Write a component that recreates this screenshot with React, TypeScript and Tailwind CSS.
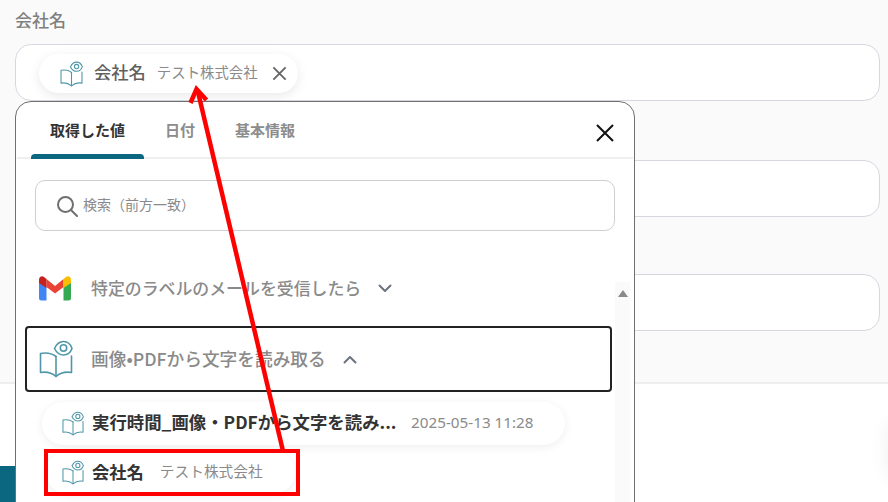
function BookEye({ className }: { className: string }) {
  return (
    <svg viewBox="0 0 34 38" className={className} fill="none" stroke="#4f97a8" strokeWidth="1.6" strokeLinejoin="round" strokeLinecap="round">
      <path d="M17 16.500C13 13.500 7 12.500 1.500 13.500V32.500C7 31.500 13 33 17 36.500C21 33 27 31.500 32.500 32.500V16" />
      <path d="M17 16.500V36.500" />
      <path d="M15.500 8.500C17.500 4 21 1.500 24.500 1.500S31.500 4 33 8.500C31.500 12.500 28 15 24.500 15S17.500 12.500 15.500 8.500Z" fill="#fff" />
      <circle cx="24.500" cy="8" r="3.200" />
    </svg>
  );
}

function Gmail() {
  return (
    <svg viewBox="0 0 32 25" className="w-8 h-[25px]">
      <path fill="#4285f4" d="M0 6v16a2.500 2.500 0 0 0 2.500 2.500H7.500V11z" />
      <path fill="#34a853" d="M24.500 11v13.500h5A2.500 2.500 0 0 0 32 22V6z" />
      <path fill="#ea4335" d="M7.500 11V3L16 10l8.500-7v8L16 17.500z" />
      <path fill="#c5221f" d="M0 4v3l7.500 5V3L5 1C3-.5 0 .5 0 4z" />
      <path fill="#fbbc04" d="M24.500 3v9L32 7V4c0-3.500-3-4.500-5-3z" />
    </svg>
  );
}

function Chevron({ up }: { up?: boolean }) {
  return (
    <svg viewBox="0 0 14 9" className="w-[14px] h-[9px]" fill="none" stroke="#6b7280" strokeWidth="2" strokeLinecap="round" strokeLinejoin="round">
      <path d={up ? "M1.500 7.500 7 2l5.500 5.500" : "M1.500 1.500 7 7l5.500-5.500"} />
    </svg>
  );
}

function Field({ className }: { className: string }) {
  return <div className={`h-[57px] rounded-[16px] border border-[#d6d8e0] bg-white ${className}`} />;
}

export default function App() {
  return (
    <div className="relative w-[888px] h-[502px] overflow-hidden bg-white font-['Noto_Sans_CJK_JP','Noto_Sans',sans-serif]">
      <div className="h-[384px] bg-[#fafafa] border-b-2 border-[#eeeeee] pl-[15px] pr-2">
        <div className="h-[44px] pt-[9px] text-[17px] leading-[22px] font-medium text-[#7f7f7f]">会社名</div>
        <Field className="" />
        <Field className="mt-[59px]" />
        <Field className="mt-[57px]" />
      </div>
      <div className="w-4 h-9 mt-[82px] bg-[#0a677f]" />

      {/* tag in first field */}
      <div className="absolute left-[39px] top-[54px] h-[39px] w-[259px] rounded-full bg-white shadow-[0_3px_12px_rgba(0,0,0,0.09)] flex items-center pl-[21px]">
        <BookEye className="w-[23px] h-[26px]" />
        <span className="ml-[11px] mb-[4px] text-[17.300px] font-medium text-[#5f5f5f]">会社名</span>
        <span className="ml-[11px] mb-[3px] text-[14.400px] text-[#8a8a8a]">テスト株式会社</span>
        <svg viewBox="0 0 16 16" className="ml-[14px] w-[15px] h-[15px]" fill="none" stroke="#666" strokeWidth="2"><path d="M1.500 1.500l13 13M14.500 1.500l-13 13" /></svg>
      </div>

      {/* picker popup */}
      <div className="absolute left-[15px] top-[101px] w-[620px] h-[420px] rounded-[16px] border border-[#6f6f6f] bg-white">
        <div className="relative h-[57px] mx-[1px] border-b-2 border-[#efefef] flex items-start pl-[14px] pt-[16px] text-[15px] font-bold text-[#8c8c8c] leading-[24px]">
          <div className="relative w-[113px] h-[41px] text-center text-[#333]">
            取得した値
            <div className="absolute left-0 right-0 top-[36px] h-[5px] rounded-t-[4px] bg-[#0a677f]" />
          </div>
          <div className="ml-[21px]">日付</div>
          <div className="ml-[40px]">基本情報</div>
          <svg viewBox="0 0 20 20" className="absolute right-[18px] top-[21px] w-[20px] h-[20px]" fill="none" stroke="#111" strokeWidth="2"><path d="M2 2l16 16M18 2 2 18" /></svg>
        </div>

        <div className="ml-[19px] mt-[21px] h-[51px] w-[580px] rounded-[10px] border border-[#cfcfcf] flex items-center pl-[20px]">
          <svg viewBox="0 0 22 22" className="w-[22px] h-[22px]" fill="none" stroke="#6f6f6f" strokeWidth="2" strokeLinecap="round"><circle cx="9.500" cy="9.500" r="7.500" /><path d="m15 15 6 6" /></svg>
          <span className="ml-[5px] mb-[2px] text-[14px] text-[#8a8a8a]">検索（前方一致）</span>
        </div>

        <div className="relative">
          <div className="absolute left-[599px] top-[20px] w-[15px] h-[300px] bg-[#fafafa]">
            <div className="mx-auto mt-[8px] w-0 h-0 border-x-[5px] border-x-transparent border-b-[7px] border-b-[#8a8a8a]" />
          </div>
          <div className="h-[53px] mt-[31px] flex items-center pl-[23px]">
            <Gmail />
            <span className="ml-[20px] mb-[1px] text-[16.900px] font-medium text-[#8a8a8a]">特定のラベルのメールを受信したら</span>
            <span className="ml-[17px]"><Chevron /></span>
          </div>
          <div className="ml-[9px] mt-[11px] w-[587px] h-[66px] rounded-[4px] border-2 border-[#222] flex items-center pl-[12px]">
            <BookEye className="w-[34px] h-[38px]" />
            <span className="ml-[18px] mb-[2px] text-[17.700px] font-medium text-[#8a8a8a]">画像•PDFから文字を読み取る</span>
            <span className="ml-[17px]"><Chevron up /></span>
          </div>
          <div className="ml-[26px] mt-[10px] w-[523px] h-[43px] rounded-full bg-white shadow-[0_2px_10px_rgba(0,0,0,0.07)] flex items-center pl-[20px]">
            <BookEye className="w-[22px] h-[25px]" />
            <span className="ml-[8px] mb-[2px] w-[304px] whitespace-nowrap text-[17.400px] font-bold text-[#333]">実行時間_画像・PDFから文字を読み...</span>
            <span className="ml-[15px] mb-[2px] text-[15.250px] text-[#8a8a8a] font-['Noto_Sans',sans-serif]">2025-05-13 11:28</span>
          </div>
          <div className="ml-[30px] mt-[6px] w-[249px] h-[43px] rounded-full bg-white shadow-[0_2px_10px_rgba(0,0,0,0.07)] flex items-center pl-[16px]">
            <BookEye className="w-[22px] h-[25px]" />
            <span className="ml-[8px] mb-[2px] text-[17.300px] font-bold text-[#333]">会社名</span>
            <span className="ml-[16px] mb-[2px] text-[14.700px] text-[#8a8a8a]">テスト株式会社</span>
          </div>
        </div>
      </div>

      {/* annotation */}
      <div className="absolute left-[44px] top-[449px] w-[256px] h-[47px] border-[4px] border-[#ff0000]" />
      <svg viewBox="0 0 888 502" className="absolute inset-0 w-[888px] h-[502px] pointer-events-none" fill="none" stroke="#ff0000">
        <path d="M283 451 198 92" strokeWidth="4.500" />
        <path d="M190.500 103 196.500 89l10 11" strokeWidth="4.500" />
      </svg>
      <div className="absolute right-[-30px] top-[420px] w-[34px] h-[60px] rounded-full bg-[#f4f4f4] blur-[8px]" />
    </div>
  );
}
